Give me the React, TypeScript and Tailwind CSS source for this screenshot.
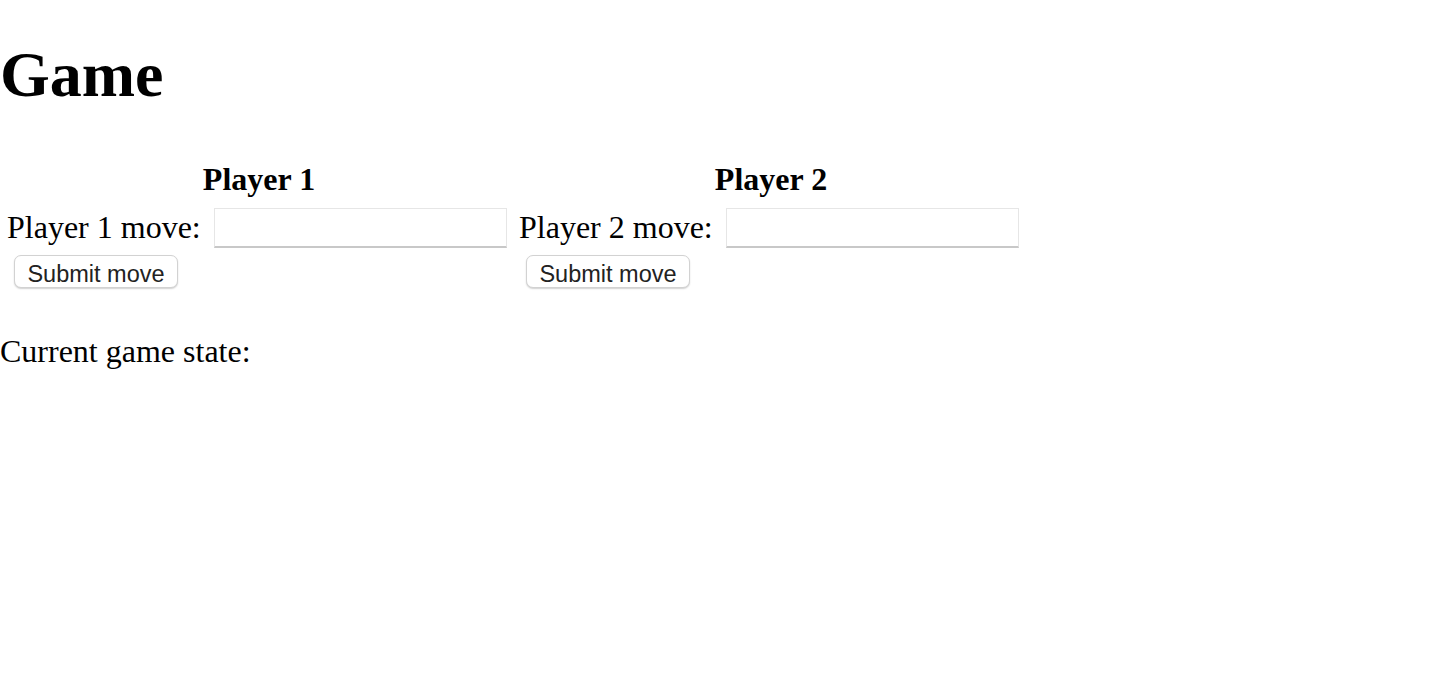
import React from "react";

function PlayerColumn({ n }: { n: number }) {
  return (
    <div className="flex w-[512px] flex-col">
      <div className="h-[36px] pl-[6px] text-center text-[32px] font-bold leading-[36px]">
        Player {n}
      </div>
      <div className="mt-[11px] flex h-[40px] items-start">
        <label className="pl-[7px] pt-[1px] text-[32px] leading-[36px] whitespace-nowrap">
          Player {n} move:
        </label>
        <input
          type="text"
          className="ml-[13px] h-[40px] w-[293px] border border-[#e6e6e6] border-b-2 border-b-[#c8c8c8] bg-white outline-none"
        />
      </div>
      <div className="mt-[7px] flex">
        <button
          type="button"
          className="ml-[14px] flex h-[33px] w-[164px] items-center justify-center rounded-[7px] border border-[#d2d2d2] bg-white pt-[6px] text-[23.5px] leading-none text-[#222222] shadow-[0_1px_1.5px_rgba(0,0,0,0.18)]"
          style={{ fontFamily: '"Liberation Sans", Arial, sans-serif' }}
        >
          Submit move
        </button>
      </div>
    </div>
  );
}

export default function App() {
  return (
    <div
      className="min-h-[684px] overflow-hidden bg-white pt-[39px] text-black"
      style={{ fontFamily: '"Liberation Serif", "Times New Roman", serif' }}
    >
      <h1 className="text-[64px] font-bold leading-[71px]">Game</h1>
      <div className="mt-[51px] flex">
        <PlayerColumn n={1} />
        <PlayerColumn n={2} />
      </div>
      <p className="mt-[45px] text-[32px] leading-[36px]">Current game state:</p>
    </div>
  );
}
